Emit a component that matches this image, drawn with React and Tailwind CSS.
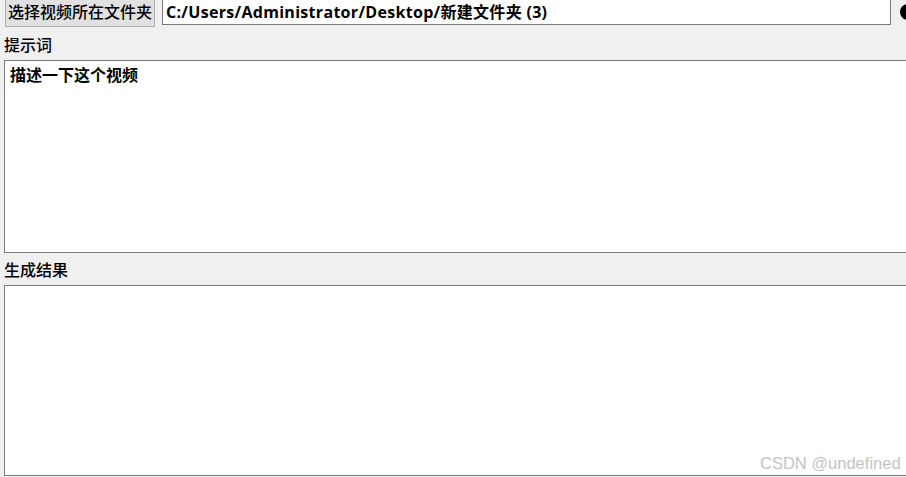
import React from 'react';

const cjk = { fontFamily: '"Liberation Sans", "Noto Sans CJK SC", sans-serif' };

function App() {
  return (
    <div
      className="relative w-[906px] h-[477px] overflow-hidden bg-[#f0f0f0] text-black"
      style={cjk}
    >
      {/* Top row: folder picker */}
      <div className="flex items-start h-[30px]">
        <button className="shrink-0 ml-[5px] -mt-[3px] w-[150px] h-[30px] bg-[#e1e1e1] border border-[#adadad] text-[16px] font-medium leading-none flex items-center justify-center pt-[1px]">
          选择视频所在文件夹
        </button>
        <div
          className="shrink-0 ml-[7px] -mt-[4px] w-[729px] h-[29px] bg-white border border-[#7a7a7a] flex items-center pl-[3px] pt-[2px] text-[16px] font-bold tracking-[0.3px] whitespace-nowrap overflow-hidden"
          style={{ fontFamily: '"Open Sans", "Noto Sans CJK SC", sans-serif' }}
        >
          C:/Users/Administrator/Desktop/新建文件夹 (3)
        </div>
        <div className="shrink-0 ml-[9px] mt-[4px] w-[16px] h-[16px] rounded-full bg-black" />
      </div>

      {/* Prompt */}
      <div className="pl-[4px] pt-[5px] h-[30px] text-[16px] font-medium leading-[22px]">提示词</div>
      <div className="ml-[4px] w-[920px] h-[193px] bg-white border border-[#7a7a7a] px-[5px] pt-[4px] text-[16px] font-bold leading-[22px]">
        描述一下这个视频
      </div>

      {/* Result */}
      <div className="pl-[4px] pt-[7px] h-[32px] text-[16px] font-medium leading-[22px]">生成结果</div>
      <div className="ml-[4px] w-[920px] h-[191px] bg-white border border-[#7a7a7a]" />

      {/* Watermark */}
      <div className="absolute left-[760px] top-[451px] text-[16.5px] text-[#c4c4c4] whitespace-nowrap" style={{ fontFamily: '"Liberation Sans", Arial, sans-serif' }}>
        CSDN @undefined
      </div>
    </div>
  );
}

export default App;
